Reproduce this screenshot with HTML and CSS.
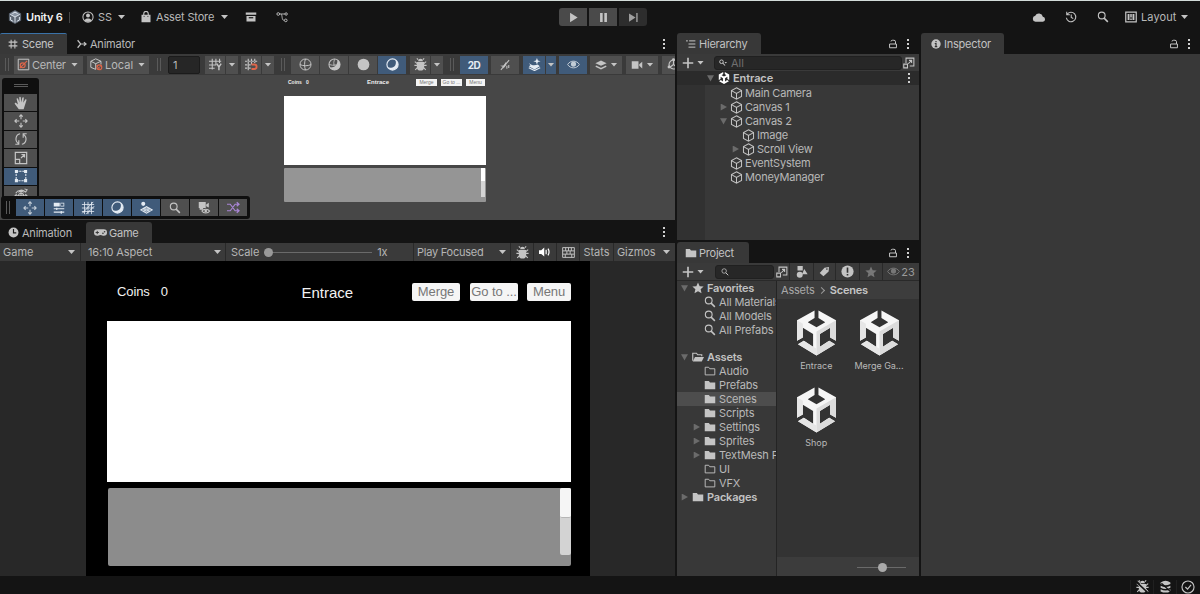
FILE: index.html
```html
<!DOCTYPE html>
<html lang="en">
<head>
<meta charset="utf-8">
<title>Unity 6</title>
<link rel="stylesheet" href="styles.css">
</head>
<body>
<svg class="sprite" aria-hidden="true">
  <symbol id="unity" viewBox="0 0 40 46">
    <path fill="#f6f6f6" d="M18 0V7.500L11 12 20 17 29 12 22 7.500V0L40 10V31L34 27.500V17.500L23.500 24V37L33 31 39 34.500 20 46 1 34.500 7 31 16.500 37V24L6 17.500V27.500L0 31V10Z"/>
    <path fill="#dcdcdc" d="M40 10V31L34 27.500V17.500L23.500 24V37L33 31 39 34.500 20 46V21.500Z"/>
    <path fill="#e6e6e6" d="M0 10V31L6 27.500V17.500L6 13.500ZM1 34.500 7 31 16.500 37 20 39V46Z"/>
  </symbol>
  <symbol id="unity-mini" viewBox="0 0 40 46">
    <path fill="currentColor" d="M17 0V8L11 12 20 17 29 12 23 8V0L40 10V31L33 27V18L24 24V36L32 31 39 35 20 46 1 35 8 31 16 36V24L7 18V27L0 31V10Z"/>
  </symbol>
  <symbol id="unity-logo" viewBox="0 0 16 16">
    <path d="M8 0 15 4V12L8 16 1 12V4Z" fill="#5d6672"/><path d="M8 1 14 4.500 8 8 2 4.500Z" fill="#8b95a3"/>
    <path d="M8 8V14.500M8 8 2.500 5M8 8 13.500 5M5 4 8 2.500 11 4M3 8V11.500L6 13M13 8V11.500L10 13" stroke="#dfe6ee" stroke-width="1.100" fill="none"/>
  </symbol>
  <symbol id="user" viewBox="0 0 16 16"><circle cx="8" cy="8" r="6.800" fill="none" stroke="currentColor" stroke-width="1.400"/><circle cx="8" cy="6" r="2.600" fill="currentColor"/><path d="M3.500 12.500C4.500 9 11.500 9 12.500 12.500 10 15 6 15 3.500 12.500Z" fill="currentColor"/></symbol>
  <symbol id="bag" viewBox="0 0 16 16"><path d="M2 5H14V15H2Z" fill="currentColor"/><path d="M5 7V3.500a3 3 0 0 1 6 0V7" fill="none" stroke="currentColor" stroke-width="1.500"/><path d="M5.500 8V6.500M10.500 8V6.500" stroke="#222" stroke-width="1"/></symbol>
  <symbol id="archive" viewBox="0 0 16 16"><path d="M1 2H15V5H1ZM2 6.500H14V14H2Z" fill="currentColor"/><path d="M5 9H11" stroke="#141414" stroke-width="1.600"/></symbol>
  <symbol id="graph" viewBox="0 0 16 16"><g fill="none" stroke="currentColor" stroke-width="1.200"><circle cx="3" cy="4" r="1.800"/><circle cx="13.500" cy="4" r="1.600"/><circle cx="13" cy="12.500" r="1.800"/><path d="M5 4H12M6.500 4C9 5 7 12.500 11 12.500"/></g></symbol>
  <symbol id="play" viewBox="0 0 16 16"><path d="M3 1 14 8 3 15Z" fill="currentColor"/></symbol>
  <symbol id="pause" viewBox="0 0 16 16"><path d="M3 1.500H6.800V14.500H3ZM9.200 1.500H13V14.500H9.200Z" fill="currentColor"/></symbol>
  <symbol id="step" viewBox="0 0 16 16"><path d="M1.500 2 11 8 1.500 14ZM12 1.500H14V14.500H12Z" fill="currentColor"/></symbol>
  <symbol id="cloud" viewBox="0 0 16 16"><path d="M4 13.500a3.500 3.500 0 0 1-.3-6.900 4.600 4.600 0 0 1 8.700 1A3 3 0 0 1 12.500 13.500Z" fill="currentColor"/></symbol>
  <symbol id="history" viewBox="0 0 16 16"><path d="M2.800 4.500A6.300 6.300 0 1 1 1.800 9M2.300 1V5H6.500M8.300 4.500V8.500L11 10" fill="none" stroke="currentColor" stroke-width="1.400"/></symbol>
  <symbol id="search" viewBox="0 0 16 16"><circle cx="6.300" cy="6" r="4.500" fill="none" stroke="currentColor" stroke-width="1.500"/><path d="M9.500 9.500 14.500 14.500" stroke="currentColor" stroke-width="2"/></symbol>
  <symbol id="search-menu" viewBox="0 0 16 16"><circle cx="5" cy="5.500" r="3.600" fill="none" stroke="currentColor" stroke-width="2"/><path d="M7.500 8 12 13" stroke="currentColor" stroke-width="2.200"/><path d="M11 6H16L13.500 9Z" fill="currentColor"/></symbol>
  <symbol id="layout" viewBox="0 0 16 16"><path d="M1 1.500H15V14.500H1Z" fill="none" stroke="currentColor" stroke-width="1.600"/><path d="M3.500 4H6V12H3.500ZM7 4H9V8.500H7ZM10 4H12.500V12H10ZM7 10H9V12H7Z" fill="currentColor"/></symbol>
  <symbol id="hash" viewBox="0 0 16 16"><path d="M5 1V15M11 1V15M1 5H15M1 11H15" stroke="currentColor" stroke-width="1.700"/></symbol>
  <symbol id="animator" viewBox="0 0 16 16"><path d="M1 2 6 8 1 14M6 8H14M11 5 14.500 8 11 11" fill="none" stroke="currentColor" stroke-width="1.900"/></symbol>
  <symbol id="pivot" viewBox="0 0 16 16"><path d="M1.500 1.500H14.500V14.500H1.500Z" fill="none" stroke="#c8c8c8" stroke-width="1.200"/><circle cx="7" cy="9" r="3" fill="none" stroke="#e0664a" stroke-width="1.400"/><path d="M3.500 12.500 12.500 3.500" stroke="#e0664a" stroke-width="1.300"/></symbol>
  <symbol id="cube" viewBox="0 0 16 16"><path d="M8 1 14.200 4.500V11.500L8 15 1.800 11.500V4.500ZM1.800 4.500 8 8 14.200 4.500M8 8V15" fill="none" stroke="currentColor" stroke-width="1.250"/></symbol>
  <symbol id="local" viewBox="0 0 16 16"><path d="M7 1 13.500 4V8M7 14 1 11.500V4L7 1M1 4 7 7 13.500 4M7 7V14" fill="none" stroke="#c8c8c8" stroke-width="1.200"/><circle cx="11.500" cy="11.500" r="3" fill="none" stroke="#e0664a" stroke-width="1.400"/><path d="M9 14 14 9M8 9 13 15" stroke="#e0664a"/></symbol>
  <symbol id="gridy" viewBox="0 0 16 16"><path d="M4 1V14M8.500 1V9M13 1V6M0 4H15M0 8.500H9M0 12.500H7" fill="none" stroke="currentColor" stroke-width="1.300"/><path d="M9.500 7 12.200 11 15 7M12.200 11V15" fill="none" stroke="currentColor" stroke-width="1.800"/></symbol>
  <symbol id="snap" viewBox="0 0 16 16"><path d="M4 1V15M8 1V8M12 1V6M0 4H15M0 8.500H7M0 12.500H7" fill="none" stroke="currentColor" stroke-width="1.400" stroke-dasharray="3 1"/><path d="M8 8H11.500a2.600 2.600 0 0 1 0 5.500H8" fill="none" stroke="#e0664a" stroke-width="2.300"/></symbol>
  <symbol id="wire" viewBox="0 0 16 16"><g fill="none" stroke="currentColor" stroke-width="1.200"><circle cx="8" cy="8" r="6.800"/><path d="M1.200 8C4 10 12 10 14.800 8M8 1.200C6.500 4 6.500 12 8 14.800"/></g></symbol>
  <symbol id="shadewire" viewBox="0 0 16 16"><circle cx="8" cy="8" r="6.800" fill="none" stroke="currentColor" stroke-width="1.300"/><path d="M11.500 2.200A6.800 6.800 0 1 1 2.200 11.500C8.500 12 12 8 11.500 2.200Z" fill="currentColor"/><path d="M1.500 8Q5 9.500 10 8.500M8 1.500Q6.500 5 7.500 10" stroke="currentColor" fill="none"/></symbol>
  <symbol id="disc" viewBox="0 0 16 16"><circle cx="8" cy="8" r="7.200" fill="currentColor"/></symbol>
  <symbol id="moon" viewBox="0 0 16 16"><circle cx="8" cy="8" r="6.900" fill="none" stroke="currentColor" stroke-width="1.400"/><path d="M11.500 2A6.900 6.900 0 1 1 2 11.500C4.500 12.500 8 12.500 10.500 10 12.500 8 12.500 4.500 11.500 2Z" fill="currentColor"/></symbol>
  <symbol id="bug" viewBox="0 0 16 16"><path d="M5 4a3 3 0 0 1 6 0ZM3.500 5H12.500V11a4.500 4.500 0 0 1-9 0Z" fill="currentColor"/><path d="M5 2 3.500.5M11 2 12.500.5M4 7 1 4.500M4 9H.5M4.500 11.500 1.500 14.500M12 7 15 4.500M12 9H15.500M11.500 11.500 14.500 14.500" stroke="currentColor" stroke-width="1.400"/></symbol>
  <symbol id="bugoff" viewBox="0 0 16 16"><use href="#bug"/><path d="M1 3 14 15" stroke="#141414" stroke-width="2"/><path d="M2 1 15 14" stroke="currentColor" stroke-width="1.200"/></symbol>
  <symbol id="mute" viewBox="0 0 16 16"><path d="M1.500 9 6 8.500 9.500 3.500V8L6 12.500 5.500 10.500" fill="currentColor"/><path d="M2.500 14.500 13.500 1.500M10.500 9V13M13 8V12" fill="none" stroke="currentColor" stroke-width="1.400"/></symbol>
  <symbol id="fx" viewBox="0 0 16 16"><path d="M1 6C5 10 9 9 12 8L14.500 10 8 14 1 10 3 9M1 6 6 3.500" fill="currentColor"/><path d="M1 12 8 15.500 15 12" stroke="currentColor" stroke-width="1.300" fill="none"/><path d="M11 0 12.200 3 15.500 4 12.200 5 11 8 9.800 5 6.500 4 9.800 3Z" fill="currentColor"/></symbol>
  <symbol id="eye" viewBox="0 0 16 16"><path d="M.8 8C4 2.500 12 2.500 15.200 8 12 13.500 4 13.500.8 8Z" fill="none" stroke="currentColor" stroke-width="1.200"/><circle cx="8" cy="7.500" r="3.200" fill="currentColor"/></symbol>
  <symbol id="layers" viewBox="0 0 16 16"><path d="M8 2 15.500 5.500 8 9 .5 5.500Z" fill="currentColor"/><path d="M1 9.500 8 12.800 15 9.500" fill="none" stroke="currentColor" stroke-width="1.900"/></symbol>
  <symbol id="camera" viewBox="0 0 16 16"><path d="M1 3H10V13H1ZM11 7 15 3.500V12.500L11 9Z" fill="currentColor"/></symbol>
  <symbol id="gizmo" viewBox="0 0 16 16"><g fill="none" stroke="currentColor" stroke-width="1.400"><circle cx="8" cy="8" r="5.500"/><path d="M8 8V3M8 8 4 11M8 8 12 11"/></g><circle cx="8" cy="2" r="1.800" fill="currentColor"/><circle cx="2.500" cy="11" r="1.800" fill="currentColor"/></symbol>
  <symbol id="hand" viewBox="0 0 16 16"><path d="M5.500 15 1 9.200C.3 8 1.500 7.200 2.500 8L4.500 9.700 3 3.500C2.800 2.300 4.300 2 4.700 3.200L6.200 7.500 6 1.800C6 .6 7.700.6 7.800 1.800L8.200 7.300 9.500 2C9.800.9 11.300 1.200 11.200 2.400L10.600 7.800 12.700 4.200C13.300 3.200 14.600 3.900 14.200 5L12 12 11 15Z" fill="currentColor"/></symbol>
  <symbol id="move" viewBox="0 0 16 16"><path d="M8 1V6M8 10V15M1 8H6M10 8H15M6 3 8 1 10 3M6 13 8 15 10 13M3 6 1 8 3 10M13 6 15 8 13 10" fill="none" stroke="currentColor" stroke-width="1.250"/></symbol>
  <symbol id="rotate" viewBox="0 0 16 16"><path d="M7 2C1.500 3 .5 10.500 5.500 13.500M5.500 9.500V14H1.500M9 14C14.500 13 15.500 5.500 10.500 2.500M10.500 6.500V2H14.500" fill="none" stroke="currentColor" stroke-width="1.300"/></symbol>
  <symbol id="scale" viewBox="0 0 16 16"><path d="M1.500 1.500H14.500V14.500H1.500ZM1.500 9.500H6.500V14.500M8 8 12 4M8.500 4H12V7.500" fill="none" stroke="currentColor" stroke-width="1.400"/></symbol>
  <symbol id="rect" viewBox="0 0 16 16"><path d="M2.500 2.500H13.500V13.500H2.500Z" fill="none" stroke="currentColor" stroke-width="1.200" stroke-dasharray="2.500 1"/><path d="M1 1H4.500V4.500H1ZM11.500 1H15V4.500H11.500ZM1 11.500H4.500V15H1ZM11.500 11.500H15V15H11.500Z" fill="currentColor"/></symbol>
  <symbol id="transform" viewBox="0 0 16 16"><g fill="none" stroke="currentColor" stroke-width="1.200"><path d="M2 6C4 2 11 1 13 5M12 1 15 2 13 5M8 3V13M5 5 8 3 11 5M1 9H15M3 7 1 9 3 11M13 7 15 9 13 11"/><circle cx="8" cy="9" r="3"/></g></symbol>
  <symbol id="sliders" viewBox="0 0 16 16"><path d="M1 1H9V6H1ZM10 1H15V6H10Z" fill="currentColor"/><path d="M10.700 2H14V5H10.700Z" fill="#3d5673"/><path d="M1 9H15M1 13.500H15M5 7.500V10.500M11 12V15.500" stroke="currentColor" stroke-width="1.600"/></symbol>
  <symbol id="gridoff" viewBox="0 0 16 16"><path d="M4 1V15M8 1V15M12 1V15M1 4H15M1 8H15M1 12H15" stroke="currentColor" stroke-width=".9"/><path d="M1.500 14 14 1M6 15 15 6" stroke="currentColor" stroke-width="1.100"/></symbol>
  <symbol id="probe" viewBox="0 0 16 16"><circle cx="4" cy="3.500" r="2.500" fill="currentColor"/><path d="M1 11 8 7 15 11 8 15Z" fill="none" stroke="currentColor" stroke-width="1.300"/><path d="M4 11 8 9 12 11 8 13ZM4.500 9 11.500 13M11.500 9 4.500 13" stroke="currentColor" fill="none"/></symbol>
  <symbol id="cameye" viewBox="0 0 16 16"><path d="M2 1H10V8H7V10H3V8H2ZM10.500 4 13.500 2V7.500L10.500 6Z" fill="currentColor"/><path d="M5.500 11.500C7.500 8.800 12.500 8.800 14.500 11.500 12.500 14.500 7.500 14.500 5.500 11.500Z" fill="#4f4f4f" stroke="currentColor" stroke-width="1.200"/><circle cx="10" cy="11.500" r="1.500" fill="currentColor"/></symbol>
  <symbol id="shuffle" viewBox="0 0 16 16"><path d="M0 4H4L10 12H14.500M0 12H4L10 4H14.500M12 1.500 14.800 4 12 6.500M12 9.500 14.800 12 12 14.500" fill="none" stroke="#a985d6" stroke-width="1.500"/></symbol>
  <symbol id="clock" viewBox="0 0 16 16"><circle cx="8" cy="8" r="7.200" fill="currentColor"/><path d="M8 3V8.500H12" fill="none" stroke="#1c1c1c" stroke-width="1.700"/></symbol>
  <symbol id="pad" viewBox="0 0 16 16"><path d="M4 4H12a4 4 0 0 1 0 8C10.500 12 10 11 8 11S5.500 12 4 12a4 4 0 0 1 0-8Z" fill="currentColor"/><path d="M4 6V10M2 8H6" stroke="#383838" stroke-width="1.200"/><circle cx="11" cy="9" r="1" fill="#383838"/><circle cx="13" cy="7" r="1" fill="#383838"/></symbol>
  <symbol id="sound" viewBox="0 0 16 16"><path d="M0 5.500H3L7 2V14L3 10.500H0Z" fill="currentColor"/><path d="M9.500 5V11M12 3.500Q14.800 8 12 12.500" fill="none" stroke="currentColor" stroke-width="1.600"/></symbol>
  <symbol id="keys" viewBox="0 0 16 16"><path d="M.8 2H15.200V14H.8ZM1 6H15M1 10H15M4.500 2V6M8 2V6M11.500 2V6M6 6V10M10 6V10M4 10V14M12 10V14" fill="none" stroke="currentColor" stroke-width="1.200"/></symbol>
  <symbol id="list" viewBox="0 0 16 16"><path d="M0 3H3M5 3H15M4 8H15M4 13H15" stroke="currentColor" stroke-width="1.600"/></symbol>
  <symbol id="lock" viewBox="0 0 16 16"><path d="M2.500 8H13.500V14H2.500ZM12 8V4.500Q12 2 9.500 2H7Q4.800 2 4.800 4" fill="none" stroke="currentColor" stroke-width="1.600"/></symbol>
  <symbol id="plus" viewBox="0 0 16 16"><path d="M8 1V15M1 8H15" stroke="currentColor" stroke-width="2.200"/></symbol>
  <symbol id="popout" viewBox="0 0 16 16"><path d="M4 8V1.500H14.500V12H9M1 9.500H6V14.500H1ZM7 9 11.500 4.500M8 4.500H11.500V8" fill="none" stroke="currentColor" stroke-width="1.400"/></symbol>
  <symbol id="folder" viewBox="0 0 16 16"><path d="M1 2.500H6.500L8 4.500H15V13.500H1Z" fill="currentColor"/></symbol>
  <symbol id="folder-o" viewBox="0 0 16 16"><path d="M1.600 3H6.200L7.700 5H14.400V13.200H1.600Z" fill="none" stroke="currentColor" stroke-width="1.200"/></symbol>
  <symbol id="folder-open" viewBox="0 0 16 16"><path d="M1 13V3H6L7.500 5H13V7" fill="none" stroke="currentColor" stroke-width="1.500"/><path d="M4 8H16L13 14H1Z" fill="currentColor"/></symbol>
  <symbol id="star" viewBox="0 0 16 16"><path d="M8 .5 10.200 5.500 15.500 6 11.500 9.700 12.700 15 8 12.200 3.300 15 4.500 9.700.5 6 5.800 5.500Z" fill="currentColor"/></symbol>
  <symbol id="types" viewBox="0 0 16 16"><path d="M2 0H9V6H2ZM11 4 15.500 11H8Z" fill="currentColor"/><circle cx="5" cy="11.500" r="4" fill="currentColor"/></symbol>
  <symbol id="tag" viewBox="0 0 16 16"><path d="M1 10 8 2.500 14.500 1.500 14 8 6.500 15Z" fill="currentColor"/><circle cx="11.500" cy="4.500" r="1.200" fill="#383838"/></symbol>
  <symbol id="alert" viewBox="0 0 16 16"><circle cx="8" cy="8" r="7.500" fill="currentColor"/><path d="M8 3V9.500M8 11V13" stroke="#333" stroke-width="2"/></symbol>
  <symbol id="info" viewBox="0 0 16 16"><circle cx="8" cy="8" r="7.500" fill="currentColor"/><path d="M8 3V5.200M6 7.200H8V12.500M6 12.300H10" fill="none" stroke="#333" stroke-width="1.900"/></symbol>
  <symbol id="dboff" viewBox="0 0 16 16"><path d="M2 3Q8-1 14 3V5Q8 8 2 5ZM2 7Q8 10 14 7V9.500Q8 12.500 2 9.500ZM2 11.500Q8 14.500 14 11.500V14Q8 17 2 14Z" fill="currentColor"/><path d="M3 4 15 15" stroke="#141414" stroke-width="1.600"/></symbol>
  <symbol id="check" viewBox="0 0 16 16"><circle cx="8" cy="8" r="6.900" fill="none" stroke="currentColor" stroke-width="1.300"/><path d="M5 8 7.500 10.500 11.500 5.500" fill="none" stroke="currentColor" stroke-width="1.400"/></symbol>
</svg>

<div class="app">
  <header class="topbar">
    <svg class="i14"><use href="#unity-logo"/></svg><b class="brand">Unity 6</b><i class="sep"></i>
    <svg class="i12 user"><use href="#user"/></svg><span class="t-ss">SS</span><i class="caret"></i>
    <svg class="i12 bag"><use href="#bag"/></svg><span class="t-store">Asset Store</span><i class="caret"></i>
    <svg class="i12 archive"><use href="#archive"/></svg><svg class="i12 graph"><use href="#graph"/></svg>
    <div class="playback"><button><svg><use href="#play"/></svg></button><button><svg><use href="#pause"/></svg></button><button class="dim"><svg><use href="#step"/></svg></button></div>
    <div class="top-right"><svg class="i14"><use href="#cloud"/></svg><svg class="i12 hist"><use href="#history"/></svg><svg class="i12 find"><use href="#search"/></svg><svg class="i12 lay"><use href="#layout"/></svg><span class="t-layout">Layout</span><i class="caret"></i></div>
  </header>

  <main class="work">
    <section class="left">
      <div class="tabs">
        <div class="tab active scene-tab"><svg class="i10"><use href="#hash"/></svg><span>Scene</span></div>
        <div class="tab animator-tab"><svg class="i10"><use href="#animator"/></svg><span>Animator</span></div>
        <i class="dots"></i>
      </div>
      <div class="scene-tools">
        <i class="grip"></i>
        <div class="btn w-center"><svg class="i13"><use href="#pivot"/></svg><span>Center</span><i class="caret"></i></div>
        <div class="btn w-local"><svg class="i13"><use href="#local"/></svg><span>Local</span><i class="caret"></i></div>
        <i class="grip g2"></i>
        <div class="num">1</div>
        <div class="btn w20 ml5"><svg class="i13"><use href="#gridy"/></svg></div><div class="btn w13"><i class="caret"></i></div>
        <div class="btn w20 ml2"><svg class="i13"><use href="#snap"/></svg></div><div class="btn w13"><i class="caret"></i></div>
        <i class="grip g3"></i>
        <div class="btn w28"><svg class="i13"><use href="#wire"/></svg></div><div class="btn w28"><svg class="i13"><use href="#shadewire"/></svg></div><div class="btn w28"><svg class="i13"><use href="#disc"/></svg></div><div class="btn w28 on"><svg class="i13"><use href="#moon"/></svg></div>
        <div class="btn w20 ml3"><svg class="i13"><use href="#bug"/></svg></div><div class="btn w13"><i class="caret"></i></div>
        <i class="grip g4"></i>
        <div class="btn w28 on two-d">2D</div>
        <div class="btn w28 ml2"><svg class="i12"><use href="#mute"/></svg></div>
        <div class="btn w22 on ml3"><svg class="i13"><use href="#fx"/></svg></div><div class="btn w10 on"><i class="caret"></i></div>
        <div class="btn w28 on ml2"><svg class="i13 soft"><use href="#eye"/></svg></div>
        <div class="btn w32 ml2"><svg class="i12"><use href="#layers"/></svg><i class="caret"></i></div>
        <div class="btn w32 ml3"><svg class="i12"><use href="#camera"/></svg><i class="caret"></i></div>
        <div class="btn w28 ml3 clip"><svg class="i13"><use href="#gizmo"/></svg></div>
      </div>
      <div class="scene-view">
        <div class="mini">
          <div class="mini-head"><span class="m-coins">Coins</span><span class="m-zero">0</span><b class="m-title">Entrace</b><span class="m-btn">Merge</span><span class="m-btn">Go to ...</span><span class="m-btn m3">Menu</span></div>
          <div class="mini-image"></div>
          <div class="mini-scroll"><div class="mini-bar"></div></div>
        </div>
        <div class="palette">
          <i class="hgrip"></i>
          <div class="tool"><svg class="i14"><use href="#hand"/></svg></div><div class="tool"><svg class="i14"><use href="#move"/></svg></div><div class="tool"><svg class="i14"><use href="#rotate"/></svg></div><div class="tool"><svg class="i14"><use href="#scale"/></svg></div><div class="tool on"><svg class="i14"><use href="#rect"/></svg></div><div class="tool cut"><svg class="i14"><use href="#transform"/></svg></div>
        </div>
        <div class="dock">
          <i class="grip"></i>
          <div class="d on"><svg class="i14 soft"><use href="#move"/></svg></div><div class="d on"><svg class="i12"><use href="#sliders"/></svg></div><div class="d on"><svg class="i14"><use href="#gridoff"/></svg></div><div class="d on"><svg class="i13"><use href="#moon"/></svg></div><div class="d on"><svg class="i13"><use href="#probe"/></svg></div><div class="d"><svg class="i12"><use href="#search"/></svg></div><div class="d"><svg class="i14"><use href="#cameye"/></svg></div><div class="d"><svg class="i13"><use href="#shuffle"/></svg></div>
        </div>
      </div>
      <div class="tabs tabs2">
        <div class="tab animation-tab"><svg class="i11"><use href="#clock"/></svg><span>Animation</span></div>
        <div class="tab active2 game-tab"><svg class="i13"><use href="#pad"/></svg><span>Game</span></div>
        <i class="dots"></i>
      </div>
      <div class="game-tools">
        <div class="g g-display"><span>Game</span><i class="caret"></i></div>
        <div class="g g-aspect"><span>16:10 Aspect</span><i class="caret"></i></div>
        <div class="g g-scale"><span>Scale</span><i class="track"><i class="knob"></i></i><span class="onex">1x</span></div>
        <div class="g g-focus"><span>Play Focused</span><i class="caret"></i></div>
        <div class="g g-icon"><svg class="i13"><use href="#bug"/></svg></div>
        <div class="g g-icon snd"><svg class="i12"><use href="#sound"/></svg></div>
        <div class="g g-icon"><svg class="i13"><use href="#keys"/></svg></div>
        <div class="g g-stats"><span>Stats</span></div>
        <div class="g g-giz"><span>Gizmos</span><i class="caret"></i></div>
      </div>
      <div class="game-view">
        <div class="screen">
          <div class="hud"><span class="coins">Coins</span><span class="zero">0</span><span class="title">Entrace</span><span class="ubtn">Merge</span><span class="ubtn">Go to ...</span><span class="ubtn menu">Menu</span></div>
          <div class="image"></div>
          <div class="scroll"><div class="bar"><div class="thumb"></div></div></div>
        </div>
      </div>
    </section>

    <section class="middle">
      <div class="tabs">
        <div class="tab active2 hier-tab"><svg class="i10"><use href="#list"/></svg><span>Hierarchy</span></div>
        <svg class="i10 lock"><use href="#lock"/></svg><i class="dots"></i>
      </div>
      <div class="hier-tools"><svg class="i12 plus"><use href="#plus"/></svg><i class="caret"></i><div class="field"><svg class="i8"><use href="#search-menu"/></svg><span>All</span></div><svg class="i12 pop"><use href="#popout"/></svg></div>
      <div class="hierarchy">
        <div class="row root"><i class="tri down"></i><svg class="i12 um"><use href="#unity-mini"/></svg><b>Entrace</b><i class="dots"></i></div>
        <div class="row l1"><i class="tri none"></i><svg class="i13"><use href="#cube"/></svg><span>Main Camera</span></div>
        <div class="row l1"><i class="tri"></i><svg class="i13"><use href="#cube"/></svg><span>Canvas 1</span></div>
        <div class="row l1"><i class="tri down"></i><svg class="i13"><use href="#cube"/></svg><span>Canvas 2</span></div>
        <div class="row l2"><i class="tri none"></i><svg class="i13"><use href="#cube"/></svg><span>Image</span></div>
        <div class="row l2"><i class="tri"></i><svg class="i13"><use href="#cube"/></svg><span>Scroll View</span></div>
        <div class="row l1"><i class="tri none"></i><svg class="i13"><use href="#cube"/></svg><span>EventSystem</span></div>
        <div class="row l1"><i class="tri none"></i><svg class="i13"><use href="#cube"/></svg><span>MoneyManager</span></div>
      </div>
      <div class="tabs tabs3">
        <div class="tab active2 proj-tab"><svg class="i12"><use href="#folder"/></svg><span>Project</span></div>
        <svg class="i10 lock"><use href="#lock"/></svg><i class="dots"></i>
      </div>
      <div class="proj-tools"><svg class="i12 plus"><use href="#plus"/></svg><i class="caret"></i><div class="field"><svg class="i8"><use href="#search"/></svg></div><div class="c c1"><svg class="i12"><use href="#popout"/></svg></div><div class="c c2"><svg class="i12"><use href="#types"/></svg></div><div class="c c3"><svg class="i11"><use href="#tag"/></svg></div><div class="c c4"><svg class="i13"><use href="#alert"/></svg></div><div class="c c5"><svg class="i12"><use href="#star"/></svg></div><div class="c c6"><svg class="i13"><use href="#eye"/></svg><span>23</span></div></div>
      <div class="project">
        <div class="tree">
          <div class="row p0"><i class="tri down"></i><svg class="i12"><use href="#star"/></svg><b>Favorites</b></div>
          <div class="row p1"><i class="tri none"></i><svg class="i12"><use href="#search"/></svg><span>All Materials</span></div>
          <div class="row p1"><i class="tri none"></i><svg class="i12"><use href="#search"/></svg><span>All Models</span></div>
          <div class="row p1"><i class="tri none"></i><svg class="i12"><use href="#search"/></svg><span>All Prefabs</span></div>
          <div class="row p0 gap"><i class="tri down"></i><svg class="i12"><use href="#folder-open"/></svg><b>Assets</b></div>
          <div class="row p1"><i class="tri none"></i><svg class="i12"><use href="#folder-o"/></svg><span>Audio</span></div>
          <div class="row p1"><i class="tri none"></i><svg class="i12"><use href="#folder"/></svg><span>Prefabs</span></div>
          <div class="row p1 sel"><i class="tri none"></i><svg class="i12"><use href="#folder"/></svg><span>Scenes</span></div>
          <div class="row p1"><i class="tri none"></i><svg class="i12"><use href="#folder"/></svg><span>Scripts</span></div>
          <div class="row p1"><i class="tri"></i><svg class="i12"><use href="#folder"/></svg><span>Settings</span></div>
          <div class="row p1"><i class="tri"></i><svg class="i12"><use href="#folder"/></svg><span>Sprites</span></div>
          <div class="row p1"><i class="tri"></i><svg class="i12"><use href="#folder"/></svg><span>TextMesh Pro</span></div>
          <div class="row p1"><i class="tri none"></i><svg class="i12"><use href="#folder-o"/></svg><span>UI</span></div>
          <div class="row p1"><i class="tri none"></i><svg class="i12"><use href="#folder-o"/></svg><span>VFX</span></div>
          <div class="row p0"><i class="tri"></i><svg class="i12"><use href="#folder"/></svg><b>Packages</b></div>
        </div>
        <div class="assets">
          <div class="crumbs"><span>Assets</span><i class="chev"></i><b>Scenes</b></div>
          <div class="grid">
            <div class="asset"><svg><use href="#unity"/></svg><span>Entrace</span></div>
            <div class="asset"><svg><use href="#unity"/></svg><span>Merge Ga...</span></div>
            <div class="asset"><svg><use href="#unity"/></svg><span>Shop</span></div>
          </div>
          <div class="zoom"><i class="track"><i class="knob"></i></i></div>
        </div>
      </div>
    </section>

    <section class="right">
      <div class="tabs">
        <div class="tab active2 insp-tab"><svg class="i10"><use href="#info"/></svg><span>Inspector</span></div>
        <svg class="i10 lock"><use href="#lock"/></svg><i class="dots"></i>
      </div>
      <div class="inspector"></div>
    </section>
  </main>

  <footer class="status"><i class="cell"><svg class="i13"><use href="#bugoff"/></svg></i><i class="cell"><svg class="i13"><use href="#dboff"/></svg></i><i class="cell"><svg class="i14"><use href="#check"/></svg></i></footer>
</div>
</body>
</html>
```
FILE: styles.css
```css
* { box-sizing: border-box; }
body { margin: 0; background: #141414; color: #b9b9b9; font: 11px/14px Inter, "Liberation Sans", sans-serif; overflow: hidden; }
i { font-style: normal; display: block; flex: none; }
svg { display: block; flex: none; color: #c4c4c4; }
span, b { white-space: nowrap; }
button { border: 0; padding: 0; }
.sprite { width: 0; height: 0; position: absolute; }
.i8 { width: 8px; height: 8px; }
.i10 { width: 10px; height: 10px; }
.i11 { width: 11px; height: 11px; }
.i12 { width: 12px; height: 12px; }
.i13 { width: 13px; height: 13px; }
.i14 { width: 14px; height: 14px; }
.caret { width: 7px; height: 4px; background: #c4c4c4; clip-path: polygon(0 0, 100% 0, 50% 100%); }
.app { width: 1200px; height: 594px; display: flex; flex-direction: column; border-top: 1px solid #d3dcd9; background: #141414; }

/* Top bar */
.topbar { height: 32px; flex: none; display: flex; align-items: center; padding-left: 8px; }
.brand { width: 37px; margin-left: 4px; color: #f2f2f2; font-weight: 600; letter-spacing: -.2px; }
.sep { width: 1px; height: 11px; background: #484848; margin-left: 6px; }
.user { margin-left: 12px; }
.t-ss { width: 15px; margin: 0 5px 0 4px; }
.bag { margin-left: 15px; }
.t-store { width: 60px; margin: 0 5px 0 4px; letter-spacing: -.15px; }
.archive { margin-left: 17px; }
.graph { margin-left: 19px; }
.playback { display: flex; gap: 2px; margin-left: 271px; }
.playback button { width: 28px; height: 18px; background: #4a4a4a; display: flex; align-items: center; justify-content: center; }
.playback button:first-child { border-radius: 3px 0 0 3px; }
.playback .dim { background: #2d2d2d; border-radius: 0 3px 3px 0; }
.playback .dim svg { color: #a0a0a0; }
.playback svg { width: 11px; height: 11px; }
.top-right { display: flex; align-items: center; margin-left: auto; width: 168px; }
.hist { margin-left: 19px; }
.find { margin-left: 20px; }
.lay { margin-left: 16px; }
.t-layout { width: 36px; margin: 0 4px 0 4px; letter-spacing: .1px; }

/* Panels and tabs */
.work { display: flex; height: 543px; flex: none; }
.left { width: 675px; flex: none; display: flex; flex-direction: column; }
.middle { width: 242px; margin-left: 2px; flex: none; display: flex; flex-direction: column; }
.right { width: 279px; margin-left: 2px; flex: none; display: flex; flex-direction: column; }
.tabs { height: 21px; flex: none; display: flex; align-items: center; }
.tab { height: 21px; display: flex; align-items: center; gap: 4px; padding-left: 8px; letter-spacing: -.22px; }
.active { background: #383838; border-top: 1px solid #3a72a8; border-radius: 2px 2px 0 0; color: #c6c6c6; }
.active2 { background: #383838; border-radius: 3px 3px 0 0; color: #c2c2c2; }
.scene-tab { width: 67px; }
.animator-tab { padding-left: 10px; gap: 3px; }
.tabs .dots { margin: 0 10px 0 auto; }
.dots { width: 2px; height: 10px; background: linear-gradient(#d0d0d0 2px, transparent 2px 4px, #d0d0d0 4px 6px, transparent 6px 8px, #d0d0d0 8px); }
.tabs2 { height: 22px; margin-top: 1px; }
.tabs2 .tab { height: 21px; margin-top: 1px; }
.animation-tab { width: 86px; gap: 3px; }
.game-tab { width: 66px; gap: 2px; }
.tabs .lock { margin-left: auto; }
.tabs .lock + .dots { margin-left: 9px; }

/* Scene toolbar */
.scene-tools { height: 21px; flex: none; display: flex; align-items: center; background: #3a3a3a; overflow: hidden; padding-left: 5px; }
.grip { width: 4px; height: 13px; border: solid #5a5a5a; border-width: 0 1px; }
.btn { height: 18px; background: #4f4f4f; display: flex; align-items: center; justify-content: center; flex: none; margin-left: 1px; }
.on { background: #405b7a; }
.on svg { color: #e4ebf3; }
.on svg.soft { color: #c2ccd6; }
.w-center { width: 69px; margin-left: 5px; gap: 2px; justify-content: flex-start; padding-left: 3px; letter-spacing: -.2px; }
.w-local { width: 62px; margin-left: 4px; gap: 2px; justify-content: flex-start; padding-left: 3px; }
.w-center span { width: 35px; margin-right: 2px; }
.w-local span { width: 30px; margin-right: 1px; }
.g2 { margin-left: 8px; }
.g3 { margin: 0 5px 0 7px; }
.g4 { margin: 0 5px 0 7px; }
.num { width: 32px; flex: none; height: 18px; margin-left: 7px; background: #262626; border: 1px solid #1b1b1b; border-radius: 2px; padding-left: 4px; line-height: 16px; }
.w10 { width: 10px; } .w13 { width: 12px; } .w20 { width: 20px; } .w22 { width: 22px; } .w28 { width: 28px; }
.w32 { width: 32px; gap: 4px; }
.ml2 { margin-left: 3px; } .ml3 { margin-left: 4px; } .ml5 { margin-left: 5px; }
.two-d { color: #e4ebf3; font-weight: 700; font-size: 10px; letter-spacing: -.4px; }
.clip { justify-content: flex-start; padding-left: 5px; }

/* Scene view */
.scene-view { height: 145px; flex: none; background: #474747; position: relative; padding-left: 284px; overflow: hidden; }
.mini { width: 202px; }
.mini-head { height: 21px; display: flex; align-items: flex-start; padding: 4px 1px 0 4px; font: bold 5px/7px "Liberation Sans", sans-serif; color: #eee; }
.m-coins { width: 18px; } .m-zero { width: 61px; } .m-title { width: 49px; font-size: 6px; }
.m-btn { width: 21px; height: 7px; margin-right: 4px; background: #f4f4f4; color: #777; font-weight: 400; text-align: center; overflow: hidden; }
.m3 { width: 19px; margin-right: 0; }
.mini-image { height: 69px; background: #fff; }
.mini-scroll { height: 34px; margin-top: 3px; background: #959595; display: flex; justify-content: flex-end; padding-right: 1px; border-radius: 1px; }
.mini-bar { width: 4px; height: 29px; background: linear-gradient(#fff 13px, #d5d5d5 13px); }
.palette { position: absolute; left: 2px; top: 3px; width: 37px; height: 119px; padding: 0 2px; background: #0f0f0f; border-radius: 3px 3px 0 0; overflow: hidden; }
.hgrip { width: 14px; height: 3px; margin: 6px auto 7px; border: solid #5a5a5a; border-width: 1px 0; }
.tool { height: 17.400px; margin-bottom: 1px; background: #4f4f4f; display: flex; align-items: center; justify-content: center; }
.tool.on, .d.on { background: #405b7a; }
.dock { position: absolute; left: 1px; top: 121px; width: 249px; height: 23px; display: flex; align-items: center; gap: 1px; padding-left: 5px; background: #0f0f0f; border-radius: 3px; }
.dock .grip { margin-right: 5px; }
.d { width: 28px; height: 17px; background: #4f4f4f; display: flex; align-items: center; justify-content: center; }

/* Game toolbar and view */
.game-tools { height: 18px; flex: none; display: flex; background: #3a3a3a; color: #b5b5b5; }
.g { display: flex; align-items: center; border-right: 1px solid #292929; flex: none; }
.g-display { width: 81px; padding: 0 5px 0 3px; }
.g-aspect { width: 145px; padding: 0 4px 0 7px; letter-spacing: -.1px; }
.g-display .caret, .g-aspect .caret, .g-focus .caret, .g-giz .caret { margin-left: auto; }
.g-scale { width: 188px; padding-left: 5px; letter-spacing: -.1px; }
.g-scale .track { width: 108px; margin-left: 5px; }
.onex { margin-left: 5px; }
.track { height: 1px; background: #6a6a6a; }
.knob { width: 9px; height: 9px; border-radius: 50%; background: #999; transform: translateY(-4px); }
.g-focus { width: 97px; padding: 0 4px 0 3px; letter-spacing: -.25px; }
.g-icon { width: 23px; justify-content: center; }
.snd svg { color: #fff; }
.g-stats { width: 34px; justify-content: center; }
.g-giz { width: 61px; padding: 0 5px 0 3px; border: 0; letter-spacing: -.1px; }
.game-view { flex: 1; background: #282828; padding-left: 86px; }
.screen { width: 504px; height: 100%; background: #000; padding: 0 19px 0 21px; font-family: "Liberation Sans", sans-serif; }
.hud { height: 60px; display: flex; align-items: center; padding: 1px 0 0 10px; color: #f2f2f2; font-size: 13px; }
.coins { width: 44px; padding-top: 1px; letter-spacing: -.1px; } .zero { width: 141px; padding-top: 1px; } .title { width: 111px; font-size: 15px; padding-top: 3px; }
.ubtn { width: 48px; height: 18px; line-height: 18px; margin-right: 10px; border-radius: 2px; background: #f5f5f5; color: #777; text-align: center; flex: none; letter-spacing: -.1px; }
.ubtn + .ubtn { margin-right: 9px; }
.ubtn.menu { width: 44px; margin-right: 0; }
.image { height: 161px; background: #fff; }
.scroll { height: 78px; margin: 6px 0 0 1px; background: #8c8c8c; border-radius: 2px; display: flex; justify-content: flex-end; }
.bar { width: 11px; height: 67px; background: #d3d3d3; border-radius: 2px; }
.thumb { height: 30px; background: #f5f5f5; border-radius: 2px; border-bottom: 1px solid #b5b5b5; }

/* Hierarchy */
.hier-tab { width: 84px; padding-left: 9px; gap: 3px; }
.hier-tools, .proj-tools { height: 17px; flex: none; background: #3a3a3a; display: flex; align-items: center; padding-left: 5px; }
.plus + .caret { margin-left: 3px; }
.field { height: 14px; display: flex; align-items: center; gap: 5px; padding-left: 5px; background: #272727; border: 1px solid #202020; border-radius: 3px; color: #6f6f6f; }
.hier-tools .field { width: 188px; margin-left: 10px; gap: 4px; padding-left: 4px; }
.hier-tools .pop { margin-left: 1px; }
.row { height: 14px; display: flex; align-items: center; gap: 3px; flex: none; letter-spacing: -.2px; }
.row b { font-weight: 600; color: #c2c2c2; }
.tri { width: 7px; height: 7px; background: #6b6b6b; clip-path: polygon(10% 0, 100% 50%, 10% 100%); }
.tri.down { clip-path: polygon(0 10%, 100% 10%, 50% 100%); }
.tri.none { visibility: hidden; }
.hierarchy { height: 169px; flex: none; background: linear-gradient(90deg, #313131 28px, #383838 28px); }
.root { background: #2b2b2b; padding: 0 9px 0 30px; margin-bottom: 1px; height: 14px; letter-spacing: -.1px; }
.root .um { color: #fff; margin-left: 1px; }
.root .dots { margin-left: auto; }
.l1 { padding-left: 43px; gap: 2px; }
.l2 { padding-left: 55px; gap: 2px; }
.l1 .tri, .l2 .tri { margin-right: 1px; }

/* Project */
.tabs3 { margin-top: 2px; }
.proj-tab { width: 72px; gap: 2px; }
.proj-tools .field { width: 59px; margin-left: 11px; }
.proj-tools { height: 18px; border-bottom: 1px solid #292929; }
.c { height: 17px; display: flex; align-items: center; justify-content: center; border-right: 1px solid #292929; flex: none; }
.c1 { width: 16px; } .c2 { width: 24px; } .c3 { width: 22px; } .c4 { width: 24px; } .c5 { width: 23px; }
.c6 { width: 36px; border: 0; }
.c5 svg, .c6 svg { color: #777; }
.c6 { color: #9a9a9a; gap: 1px; letter-spacing: -.1px; }
.project { flex: 1; display: flex; min-height: 0; }
.tree { width: 100px; background: #383838; border-right: 1px solid #242424; overflow: hidden; flex: none; }
.p0 { padding-left: 4px; gap: 4px; }
.p0 b { margin-left: -1px; }
.p1 { padding-left: 16px; gap: 3px; letter-spacing: -.15px; }
.p1 .tri { margin-right: 1px; }
.gap { margin-top: 13px; }
.sel { background: #4d4d4d; }
.assets { width: 142px; background: #333; display: flex; flex-direction: column; }
.crumbs { height: 18px; background: #3d3d3d; display: flex; align-items: center; padding-left: 4px; color: #a8a8a8; letter-spacing: -.2px; }
.crumbs b { font-weight: 600; color: #c6c6c6; }
.chev { width: 5px; height: 5px; border: solid #999; border-width: 1px 1px 0 0; transform: rotate(45deg); margin: 0 6px 0 4px; }
.grid { display: grid; grid-template-columns: 62.500px 63px; grid-auto-rows: 76.500px; padding: 11px 0 0 8px; flex: 1; align-content: start; }
.asset { display: flex; flex-direction: column; align-items: center; font-size: 9px; letter-spacing: -.05px; }
.asset svg { width: 39px; height: 46px; }
.asset span { margin-top: 3px; }
.zoom { height: 19px; background: #3c3c3c; padding: 10px 0 0 80px; }
.zoom .track { width: 49px; }
.zoom .knob { margin-left: 21px; background: #aaa; }

.insp-tab { width: 83px; padding-left: 10px; gap: 3px; }
.inspector { flex: 1; background: #383838; }

/* Status bar */
.status { flex: 1; display: flex; justify-content: flex-end; align-items: center; padding: 3px 1px 0 0; }
.cell { width: 23px; height: 14px; display: flex; align-items: center; justify-content: center; border-left: 1px solid #202020; }
```
